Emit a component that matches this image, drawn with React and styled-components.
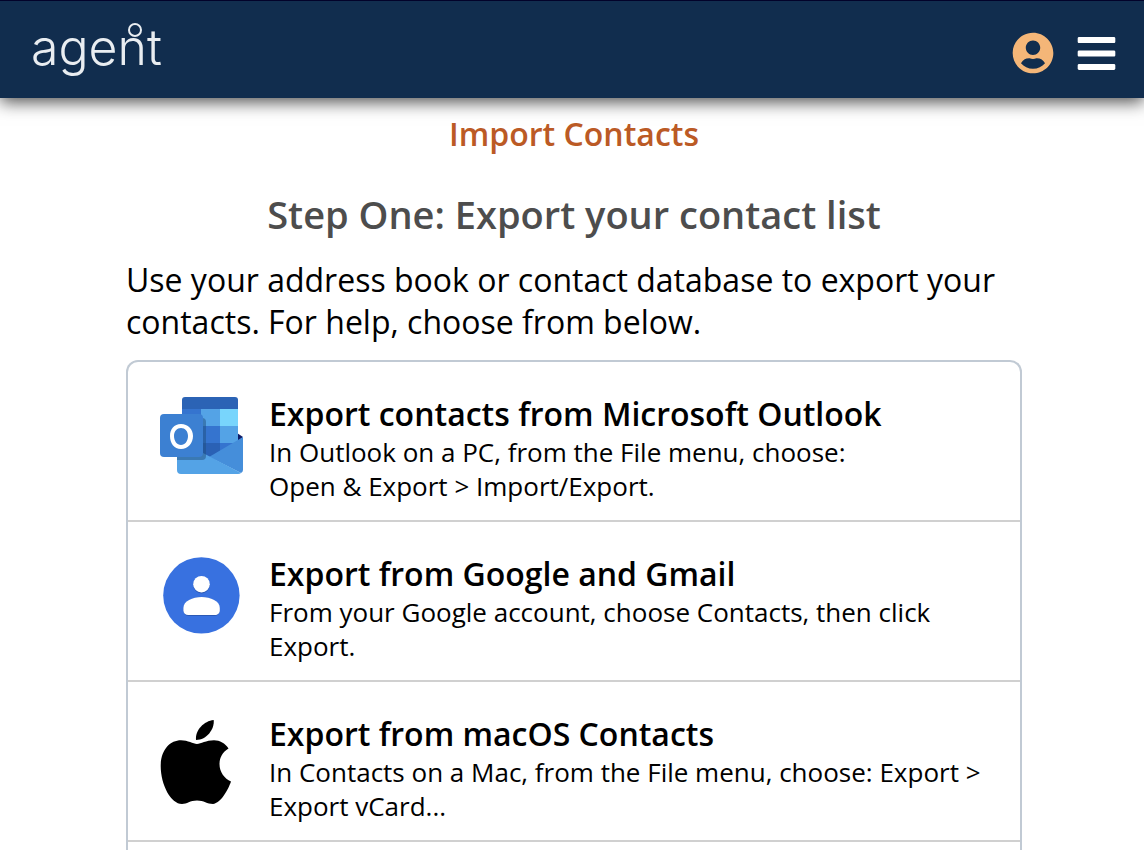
import React from "react";
import styled, { createGlobalStyle } from "styled-components";
import { FaBars, FaUserCircle } from "react-icons/fa";

const GlobalStyle = createGlobalStyle`
	* {
		box-sizing: border-box;
	}
	body {
		margin: 0;
		background-color: #fff;
		color: #000;
		font-family: "Open Sans", "Noto Sans", sans-serif;
	}
`;

function AgentLogo() {
	return (
		<svg width="140" height="80" viewBox="0 -8 140 80" aria-label="agent">
			<text
				x="0"
				y="44"
				fill="#e9edf1"
				fontFamily="Inter, sans-serif"
				fontSize="50"
				fontWeight="300"
			>
				agent
			</text>
			<circle
				cx="104"
				cy="9"
				r="6"
				fill="none"
				stroke="#e9edf1"
				strokeWidth="2"
			/>
		</svg>
	);
}

function OutlookIcon() {
	return (
		<svg width="84" height="78" viewBox="0 0 84 78" aria-hidden="true">
			<path d="M77 36l6 4-6 5z" fill="#0f1c68" />
			<path d="M22 3q0-3 3-3h50q3 0 3 3v9H22z" fill="#2b63b5" />
			<path d="M22 12h19v17H22z" fill="#3574cf" />
			<path d="M41 12h19v17H41z" fill="#54a3e6" />
			<path d="M60 12h18v17H60z" fill="#78d5fc" />
			<path d="M22 29h19v17H22z" fill="#2b63b5" />
			<path d="M41 29h19v17H41z" fill="#3574cf" />
			<path d="M60 29h18v17H60z" fill="#54a3e6" />
			<path d="M22 46h38v17H22z" fill="#2a61b5" />
			<path d="M60 46h18v10H60z" fill="#3574cf" />
			<path d="M83 40v33q0 2-2 3L49 60z" fill="#458eda" />
			<path d="M17 41l26 15 38 20q-1 1-3 1H21q-4 0-4-4z" fill="#54a3e6" />
			<path d="M17 21h25q4 0 4 4v34q0 4-4 4H17z" fill="#20507f" opacity="0.5" />
			<rect y="17" width="43" height="43" rx="4" fill="#3c80d2" />
			<path
				fillRule="evenodd"
				d="M21 27c7 0 12 5 12 12s-5 13-12 13-11-6-11-13 4-12 11-12zm0 4c-4 0-7 3-7 8s3 9 7 9 7-4 7-9-3-8-7-8z"
				fill="#fff"
			/>
		</svg>
	);
}

function GoogleContactsIcon() {
	return (
		<svg width="84" height="78" viewBox="0 0 84 78" aria-hidden="true">
			<circle cx="41.4" cy="38.4" r="38.2" fill="#3871e0" />
			<g fill="#2b59b5">
				<circle cx="41.5" cy="28.2" r="8.3" />
				<path d="M23.4 53c0-8.5 9-13 18.2-13s18.2 4.5 18.2 13c0 3-2 6-5 6H28.4c-3 0-5-3-5-6z" />
			</g>
			<g fill="#fff">
				<circle cx="41.5" cy="27.2" r="8.3" />
				<path d="M23.4 51c0-7 9-11 18.2-11s18.2 4 18.2 11v2.500c0 2.500-2 4.500-5 4.500H28.4c-3 0-5-2-5-4.500z" />
			</g>
		</svg>
	);
}

function AppleIcon() {
	return (
		<svg width="72" height="88" viewBox="0 -3 72 88" aria-hidden="true">
			<path d="M53.7 0c1 9-7 20-17.7 20C35 10 44 1 53.7 0z" />
			<path d="M37 24c4 0 9-3.7 17-3.7 6 0 11 3 14.5 8.2-6 3.5-9 9-9 15.5 0 8 5 14.5 11.5 17.5-3 8.5-10 21.5-18 22.5-6 0-9-3.5-16-3.5S27 84 22 84C11 84 .7 65 .7 46 .7 30 10 20.3 21 20.3c7 0 12 3.7 16 3.7z" />
		</svg>
	);
}

const exportOptions = [
	{
		id: "outlook",
		icon: <OutlookIcon />,
		title: "Export contacts from Microsoft Outlook",
		text: (
			<>
				In Outlook on a PC, from the File menu, choose:
				<br />
				Open &amp; Export &gt; Import/Export.
			</>
		),
	},
	{
		id: "google",
		icon: <GoogleContactsIcon />,
		title: "Export from Google and Gmail",
		text: "From your Google account, choose Contacts, then click Export.",
	},
	{
		id: "macos",
		icon: <AppleIcon />,
		title: "Export from macOS Contacts",
		text: "In Contacts on a Mac, from the File menu, choose: Export > Export vCard...",
	},
];

function App() {
	return (
		<>
			<GlobalStyle />
			<Page>
				<Header>
					<LogoLink href="#">
						<AgentLogo />
					</LogoLink>
					<HeaderActions>
						<IconButton type="button" aria-label="Account" $color="#f4b678">
							<FaUserCircle size={42} />
						</IconButton>
						<IconButton type="button" aria-label="Menu" $color="#fff">
							<FaBars size={43} />
						</IconButton>
					</HeaderActions>
				</Header>
				<Content>
					<PageTitle>Import Contacts</PageTitle>
					<StepTitle>Step One: Export your contact list</StepTitle>
					<Intro>
						Use your address book or contact database to export your
						contacts. For help, choose from below.
					</Intro>
					<OptionList>
						{exportOptions.map((option) => (
							<Option key={option.id}>
								<OptionIcon>{option.icon}</OptionIcon>
								<OptionDetails>
									<OptionTitle>{option.title}</OptionTitle>
									<OptionText>{option.text}</OptionText>
								</OptionDetails>
							</Option>
						))}
					</OptionList>
				</Content>
			</Page>
		</>
	);
}

export default App;

const Page = styled.div`
	display: flex;
	flex-direction: column;
	min-height: 100vh;
`;
const Header = styled.header`
	display: flex;
	justify-content: space-between;
	align-items: center;
	height: 98px;
	padding: 7px 26px 0 31px;
	border-top: 1px solid #02022a;
	background-color: #112d4e;
	box-shadow: 0 4px 16px rgba(0, 0, 0, 0.7);
`;
const LogoLink = styled.a`
	display: block;
	svg {
		display: block;
	}
`;
const HeaderActions = styled.div`
	display: flex;
	align-items: center;
	gap: 21px;
`;
const IconButton = styled.button`
	display: flex;
	padding: 0;
	border: none;
	background: none;
	color: ${({ $color }) => $color};
	cursor: pointer;
	&:hover {
		opacity: 0.8;
	}
`;
const Content = styled.main`
	display: flex;
	flex: 1;
	flex-direction: column;
	padding: 15px 122px 0 126px;
`;
const PageTitle = styled.h1`
	margin: 0 0 31px;
	color: #bb5a25;
	font-size: 32px;
	font-weight: 600;
	line-height: 42px;
	text-align: center;
`;
const StepTitle = styled.h2`
	margin: 0 0 17px;
	color: #4d4d4d;
	font-size: 38px;
	font-weight: 600;
	line-height: 56px;
	text-align: center;
`;
const Intro = styled.p`
	margin: 0 0 17px;
	font-size: 32px;
	line-height: 42px;
`;
const OptionList = styled.ul`
	flex: 1;
	margin: 0;
	padding: 0;
	border: 2px solid #c1cad4;
	border-bottom: none;
	border-radius: 12px 12px 0 0;
	list-style: none;
`;
const Option = styled.li`
	display: flex;
	min-height: 160px;
	padding: 31px 32px 17px;
	border-bottom: 2px solid #d0d0d0;
`;
const OptionIcon = styled.div`
	flex: none;
	width: 109px;
	padding-top: 4px;
	svg {
		display: block;
	}
`;
const OptionDetails = styled.div`
	flex: 1;
`;
const OptionTitle = styled.h3`
	margin: 0;
	font-size: 32px;
	font-weight: 600;
	line-height: 42px;
`;
const OptionText = styled.p`
	margin: 0;
	font-size: 26px;
	line-height: 34px;
`;
